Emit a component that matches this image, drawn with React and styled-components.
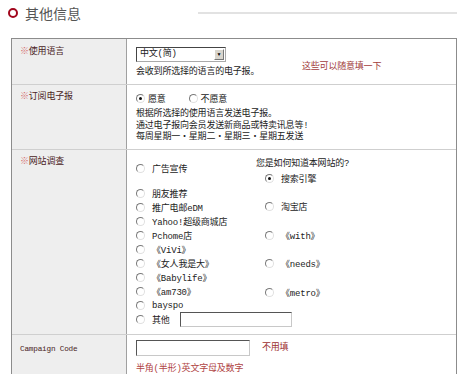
import React from 'react'
import styled, { createGlobalStyle } from 'styled-components'

const GlobalStyle = createGlobalStyle`
  html, body {
    margin: 0;
    padding: 0;
    background: #fff;
  }
  body {
    font-family: "Liberation Mono", "Noto Sans CJK SC", monospace;
    font-size: 9px;
    color: #222;
    letter-spacing: -0.2px;
  }
`

// header
const Header = styled.div`
  display: flex;
  align-items: center;
  height: 26px;
  padding: 0 11px 0 8px;
`

const Ring = styled.span`
  width: 6px;
  height: 6px;
  border: 2.5px solid #a1061c;
  border-radius: 50%;
`

const Title = styled.h2`
  margin: 0 0 0 7px;
  font-family: "Noto Sans CJK SC", sans-serif;
  font-weight: normal;
  font-size: 14px;
  line-height: 16px;
  letter-spacing: 0;
  color: #555;
`

const Rule = styled.span`
  flex: 1;
  margin-left: 117px;
  height: 2px;
  background: #e2e2e2;
`

// table
const Table = styled.div`
  margin: 12px 0 0 11px;
  width: 444px;
  border: 1px solid #8c8c8c;
`

const Row = styled.div`
  display: grid;
  grid-template-columns: 115px 1fr;
  min-height: ${p => p.$height}px;
  & + & {
    border-top: 1px solid #cfcfcf;
  }
`

const Label = styled.div`
  background: #eeeeee;
  border-right: 1px solid #a0a0a0;
  padding: ${p => p.$top}px 0 0 8px;
  line-height: 11px;
  color: #4a2424;
  font-family: ${p => (p.$latin ? '"Liberation Mono", monospace' : 'inherit')};
  font-size: ${p => (p.$latin ? '7.7px' : '9px')};
`

const Mark = styled.span`
  color: #d46b6b;
`

const Cell = styled.div`
  display: flex;
  flex-direction: ${p => (p.$column ? 'column' : 'row')};
  align-items: flex-start;
  padding: ${p => p.$top}px 0 0 9px;
`

const Block = styled.div`
  display: flex;
  flex-direction: column;
  width: ${p => (p.$width ? `${p.$width}px` : 'auto')};
`

const Note = styled.span`
  color: ${p => p.$color || '#a23c3c'};
  line-height: 11px;
  white-space: nowrap;
  margin-top: ${p => p.$top || 0}px;
  margin-left: ${p => p.$left || 0}px;
`

const Text = styled.p`
  margin: ${p => p.$top || 0}px 0 0;
  line-height: ${p => p.$lh || 11}px;
`

// select
const Select = styled.div`
  display: flex;
  align-items: center;
  width: 88px;
  height: 13px;
  border: 1px solid;
  border-color: #444 #aaa #aaa #444;
  background: #fff;
`

const SelectValue = styled.span`
  flex: 1;
  padding-left: 3px;
  line-height: 13px;
`

const SelectArrow = styled.span`
  display: flex;
  align-items: center;
  justify-content: center;
  width: 10px;
  height: 11px;
  margin-right: 1px;
  background: #d8d5cd;
  border: 1px solid;
  border-color: #fff #777 #777 #fff;
  box-sizing: border-box;
  font-size: 5px;
  color: #000;
`

// radios
const RadioLine = styled.div`
  display: flex;
  align-items: center;
  height: ${p => p.$h || 14}px;
  margin-top: ${p => p.$top || 0}px;
  padding-left: ${p => p.$indent || 0}px;
`

const Radio = styled.span`
  position: relative;
  flex: none;
  width: 7px;
  height: 7px;
  margin-right: ${p => p.$gap}px;
  border: 1px solid;
  border-color: #7a7a7a #e0e0e0 #e0e0e0 #7a7a7a;
  border-radius: 50%;
  background: #fff;
  &::after {
    content: '';
    display: ${p => (p.$checked ? 'block' : 'none')};
    position: absolute;
    left: 2px;
    top: 2px;
    width: 3px;
    height: 3px;
    border-radius: 50%;
    background: #111;
  }
`

const OptionText = styled.span`
  flex: none;
  white-space: nowrap;
`

const Option = ({ checked, gap = 7, children }) => (
  <>
    <Radio $checked={checked} $gap={gap} />
    <OptionText>{children}</OptionText>
  </>
)

const Spacer = styled.span`
  flex: none;
  width: ${p => p.$w}px;
`

const Input = styled.span`
  display: block;
  flex: none;
  width: ${p => p.$w}px;
  height: ${p => p.$h}px;
  margin-left: ${p => p.$left || 0}px;
  border: 1px solid;
  border-color: #555 #c8c8c8 #c8c8c8 #555;
  box-sizing: border-box;
  background: #fff;
`

const Survey = styled.div`
  display: grid;
  grid-template-columns: 120px 1fr;
  width: 100%;
`

const leftItems = [
  '推广电邮eDM',
  'Yahoo!超级商城店',
  'Pchome店',
  '《ViVi》',
  '《女人我是大》',
  '《Babylife》',
  '《am730》',
  'bayspo',
]

const rightItems = ['淘宝店', '《with》', '《needs》', '《metro》']

const App = () => {
  return (
    <>
      <GlobalStyle />
      <Header>
        <Ring />
        <Title>其他信息</Title>
        <Rule />
      </Header>
      <Table>
        <Row $height={45}>
          <Label $top={8}>
            <Mark>※</Mark>使用语言
          </Label>
          <Cell $top={8}>
            <Block $width={166}>
              <Select>
                <SelectValue>中文(简)</SelectValue>
                <SelectArrow>▼</SelectArrow>
              </Select>
              <Text $top={5}>会收到所选择的语言的电子报。</Text>
            </Block>
            <Note $top={15}>这些可以随意填一下</Note>
          </Cell>
        </Row>

        <Row $height={64}>
          <Label $top={7}>
            <Mark>※</Mark>订阅电子报
          </Label>
          <Cell $top={6} $column>
            <RadioLine>
              <Option checked gap={3}>愿意</Option>
              <Spacer $w={23} />
              <Option gap={3}>不愿意</Option>
            </RadioLine>
            <Block>
              <Text $top={4} $lh={11.5}>
                根据所选择的使用语言发送电子报。
                <br />
                通过电子报向会员发送新商品或特卖讯息等!
                <br />
                每周星期一・星期二・星期三・星期五发送
              </Text>
            </Block>
          </Cell>
        </Row>

        <Row $height={184}>
          <Label $top={7}>
            <Mark>※</Mark>网站调查
          </Label>
          <Cell $top={7}>
            <Survey>
              <Block>
                <RadioLine $top={4}>
                  <Option>广告宣传</Option>
                </RadioLine>
                <RadioLine $top={11} $h={14.1}>
                  <Option>朋友推荐</Option>
                </RadioLine>
                {leftItems.map(item => (
                  <RadioLine key={item} $h={14.1}>
                    <Option>{item}</Option>
                  </RadioLine>
                ))}
                <RadioLine $h={14.1}>
                  <Option>其他</Option>
                  <Input $w={112} $h={15} $left={10} />
                </RadioLine>
              </Block>
              <Block>
                <Text $lh={14}>您是如何知道本网站的?</Text>
                <RadioLine $indent={9}>
                  <Option checked>搜索引擎</Option>
                </RadioLine>
                {rightItems.map(item => (
                  <RadioLine key={item} $indent={9} $top={14.5}>
                    <Option>{item}</Option>
                  </RadioLine>
                ))}
              </Block>
            </Survey>
          </Cell>
        </Row>

        <Row $height={60}>
          <Label $top={9} $latin>
            Campaign Code
          </Label>
          <Cell $top={5} $column>
            <RadioLine $h={16}>
              <Input $w={114} $h={16} />
              <Note $left={12} $color="#9c2f2f">不用填</Note>
            </RadioLine>
            <Note $top={8} $color="#b04444">半角(半形)英文字母及数字</Note>
          </Cell>
        </Row>
      </Table>
    </>
  )
}

export default App
